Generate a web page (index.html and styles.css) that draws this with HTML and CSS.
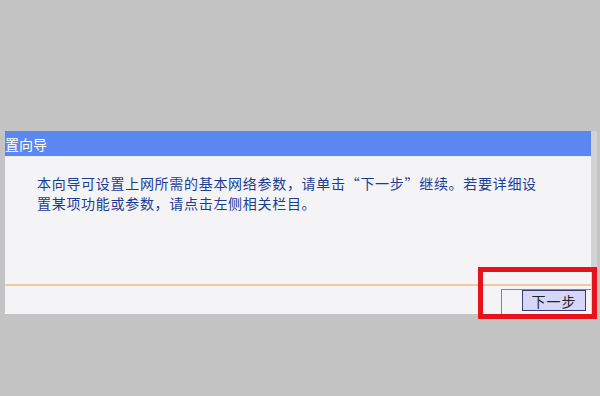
FILE: index.html
```html
<!DOCTYPE html>
<html>
<head>
<meta charset="UTF-8">
<title>设置向导</title>
<link rel="stylesheet" href="styles.css">
</head>
<body>

    <div class="page">
        <div class="panel">
            <div class="title-bar">置向导</div>
            <div class="content">
                <p>本向导可设置上网所需的基本网络参数，请单击“下一步”继续。若要详细设置某项功能或参数，请点击左侧相关栏目。</p>
            </div>
            <div class="footer">
                <div class="btn-cell">
                    <button type="button">下一步</button>
                </div>
            </div>
        </div>
        <div class="side-strip"></div>
    </div>

    <!-- 标注框 -->
    <div class="mark"></div>

</body>
</html>
```

FILE: styles.css
```css
*{
    box-sizing: border-box;
}

body{
    margin: 0;
    background-color: #c4c4c4;
    font-family: "Noto Sans CJK SC", "Liberation Sans", sans-serif;
    height: 396px;
    overflow: hidden;
}

.page {
    display: flex;
    padding-top: 131px;
    padding-left: 5px;
}

.panel {
    width: 586px;
    height: 183px;
    background-color: #f4f4f6;
    display: flex;
    flex-direction: column;
    overflow: hidden;
}

.side-strip {
    width: 6px;
    height: 183px;
    background-color: #d3d3d5;
}

.title-bar {
    height: 26px;
    background-color: #5b87f1;
    color: #fff;
    font-size: 14px;
    line-height: 26px;
    padding-left: 0;
    white-space: nowrap;
    border-bottom: 1px solid #e8eefc;
}

.content {
    flex: 1;
    padding: 16px 46px 0 32px;
}

.content p {
    margin: 0;
    color: #1c3b94;
    font-size: 14px;
    letter-spacing: 0.7px;
    line-height: 20px;
}

.footer {
    height: 30px;
    border-top: 2px solid #f1c99c;
    display: flex;
    justify-content: flex-end;
    padding-top: 3px;
}

.btn-cell {
    width: 90px;
    border-top: 1px solid #b07080;
    border-left: 1px solid #b07080;
    padding-left: 20px;
}

.btn-cell button {
    display: block;
    width: 64px;
    height: 21px;
    padding: 0;
    background-color: #d6d6f8;
    border: 1px solid #3c3c70;
    color: #222;
    font-family: "Noto Sans CJK SC", sans-serif;
    font-size: 14px;
    line-height: 18px;
    letter-spacing: 1px;
}

.mark {
    position: absolute;
    left: 478px;
    top: 267px;
    width: 119px;
    height: 52px;
    border: 5px solid #e8121c;
}
```
